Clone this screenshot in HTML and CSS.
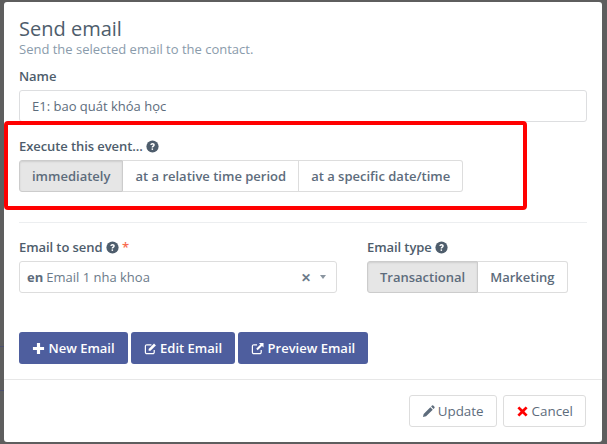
FILE: index.html
```html
<!DOCTYPE html>
<html lang="en">
<head>
<meta charset="UTF-8" />
<meta name="viewport" content="width=device-width, initial-scale=1" />
<title>Send email</title>
<link rel="stylesheet" href="styles.css">
</head>
<body>

<div class="modal">
  <div class="modal-body">
    <h2 class="title">Send email</h2>
    <p class="subtitle">Send the selected email to the contact.</p>

    <label class="field-label label-name">Name</label>
    <input class="text-input" type="text" value="E1: bao quát khóa học" />

    <label class="field-label label-execute">Execute this event...
      <svg class="help" viewBox="0 0 16 16"><circle cx="8" cy="8" r="7.500"/><path class="help-mark" d="M5.300 6.200C5.400 4.600 6.600 3.700 8 3.700c1.600 0 2.800.9 2.800 2.300 0 1.100-.7 1.700-1.400 2.200-.5.300-.7.600-.7 1.100H6.900c0-1.100.4-1.700 1.100-2.200.6-.4.900-.6.900-1 0-.4-.4-.7-.9-.7-.6 0-1 .3-1.100.9z"/><rect class="help-mark" x="6.900" y="10.300" width="1.800" height="1.900"/></svg>
    </label>
    <div class="btn-group">
      <button class="btn active">immediately</button>
      <button class="btn">at a relative time period</button>
      <button class="btn">at a specific date/time</button>
    </div>

    <hr class="divider" />

    <div class="email-row">
      <div class="email-col">
        <label class="field-label">Email to send
          <svg class="help" viewBox="0 0 16 16"><circle cx="8" cy="8" r="7.500"/><path class="help-mark" d="M5.300 6.200C5.400 4.600 6.600 3.700 8 3.700c1.600 0 2.800.9 2.800 2.300 0 1.100-.7 1.700-1.400 2.200-.5.300-.7.600-.7 1.100H6.900c0-1.100.4-1.700 1.100-2.200.6-.4.900-.6.900-1 0-.4-.4-.7-.9-.7-.6 0-1 .3-1.100.9z"/><rect class="help-mark" x="6.900" y="10.300" width="1.800" height="1.900"/></svg>
          <span class="required">*</span>
        </label>
        <div class="select">
          <span class="select-value"><b>en</b>Email 1 nha khoa</span>
          <span class="select-clear">&#10005;</span>
          <span class="select-arrow"></span>
        </div>
      </div>
      <div class="type-col">
        <label class="field-label">Email type
          <svg class="help" viewBox="0 0 16 16"><circle cx="8" cy="8" r="7.500"/><path class="help-mark" d="M5.300 6.200C5.400 4.600 6.600 3.700 8 3.700c1.600 0 2.800.9 2.800 2.300 0 1.100-.7 1.700-1.400 2.200-.5.300-.7.600-.7 1.100H6.900c0-1.100.4-1.700 1.100-2.200.6-.4.900-.6.900-1 0-.4-.4-.7-.9-.7-.6 0-1 .3-1.100.9z"/><rect class="help-mark" x="6.900" y="10.300" width="1.800" height="1.900"/></svg>
        </label>
        <div class="btn-group">
          <button class="btn active">Transactional</button>
          <button class="btn">Marketing</button>
        </div>
      </div>
    </div>

    <div class="actions">
      <button class="btn-primary">
        <svg class="icon" viewBox="0 0 14 14"><path fill="currentColor" d="M5.300 1h3.400v4.300H13v3.400H8.700V13H5.300V8.700H1V5.300h4.300z"/></svg>
        New Email</button>
      <button class="btn-primary">
        <svg class="icon" viewBox="0 0 14 14"><path fill="none" stroke="currentColor" stroke-width="1.300" d="M11 8.500V11a1.500 1.500 0 0 1-1.500 1.500H3A1.500 1.500 0 0 1 1.500 11V4.500A1.500 1.500 0 0 1 3 3h5"/><path fill="currentColor" d="M5 7.500 10.800 1.700l2 2L7 9.500H5z"/></svg>
        Edit Email</button>
      <button class="btn-primary">
        <svg class="icon" viewBox="0 0 14 14"><path fill="none" stroke="currentColor" stroke-width="1.300" d="M11 8.500V11a1.500 1.500 0 0 1-1.500 1.500H3A1.500 1.500 0 0 1 1.500 11V4.500A1.500 1.500 0 0 1 3 3h3.500"/><path fill="currentColor" d="M8.500 1H13.500V6L11.800 4.300 7.200 8.900 5.600 7.300 10.200 2.700z"/></svg>
        Preview Email</button>
    </div>
  </div>

  <div class="modal-footer">
    <button class="btn-plain">
      <svg class="icon" viewBox="0 0 14 14"><path fill="currentColor" d="M1 13l.8-3.400 7.200-7.200 2.600 2.600-7.200 7.200zM9.800 1.600l1-1a1 1 0 0 1 1.300 0l1.300 1.300a1 1 0 0 1 0 1.300l-1 1z"/></svg>
      Update</button>
    <button class="btn-plain">
      <svg class="icon icon-cancel" viewBox="0 0 14 14"><path fill="currentColor" d="M3.600 1.500 7 4.900l3.400-3.400 2.100 2.100L9.100 7l3.400 3.400-2.100 2.100L7 9.100l-3.400 3.400-2.100-2.100L4.900 7 1.500 3.600z"/></svg>
      Cancel</button>
  </div>

  <div class="highlight"></div>
</div>

</body>
</html>
```

FILE: styles.css
```css
* { box-sizing: border-box; }
html, body { height: 100%; }
body {
  margin: 0; padding: 2px 5px 2px 4px; font-family: "Open Sans", sans-serif; color: #4e5d6c; overflow: hidden;
  background: linear-gradient(#4c5070, #4c5070) 0 346px / 4px 1px no-repeat, linear-gradient(#4c5070, #4c5070) 0 390px / 4px 1px no-repeat, #5e5e5e;
}

.modal { position: relative; height: 440px; background: #fff; border-radius: 3px; }
.modal-body { padding: 13.500px 15px 0 15px; height: 378px; border-bottom: 1px solid #e7e7e7; }

.title { margin: 0; font-size: 20px; font-weight: 400; line-height: 26px; color: #4e5d6c; }
.subtitle { margin: 0; font-size: 13px; line-height: 15px; color: #8a9bab; }

.field-label { display: block; font-size: 13px; font-weight: 600; line-height: 18px; letter-spacing: -.08px; color: #4e5d6c; margin-top: 11px; margin-bottom: 5px; }
.label-name { margin-top: 10.500px; }
.label-execute { margin-top: 15px; }
.help { width: 13px; height: 13px; vertical-align: -2px; }
.help circle { fill: #4e5d6c; }
.help .help-mark { fill: #fff; }
.required { color: #f86b4f; }

.text-input { display: block; width: 100%; height: 32px; padding: 0 12px; border: 1px solid #dddee0; border-radius: 3px; font: 13px "Open Sans", sans-serif; color: #5d6c7c; outline: none; }

.btn-group { display: flex; }
.btn { height: 32px; padding: 0 12px; border: 1px solid #ddd; border-left-width: 0; background: #fff; font: 600 13px "Open Sans", sans-serif; color: #5d6c7c; white-space: nowrap; }
.btn:first-child { border-left-width: 1px; border-radius: 3px 0 0 3px; }
.btn:last-child { border-radius: 0 3px 3px 0; }
.btn.active { background: #e6e6e6; border-color: #ccc; box-shadow: inset 0 1px 2px rgba(0,0,0,.1); }

.divider { margin: 30px 0 0; border: 0; border-top: 1px solid #eceef0; }

.email-row { display: flex; margin-top: 4px; }
.email-col { width: 318px; margin-right: 30px; }
.select { display: flex; align-items: center; height: 32px; padding: 0 10px 0 7px; border: 1px solid #ddd; border-radius: 3px; font-size: 13px; color: #6b7a89; }
.select-value { flex: 1; }
.select-value b { font-weight: 700; color: #5d6c7c; margin-right: 3px; }
.select-clear { font-size: 12px; font-weight: 700; color: #6b7a89; margin-right: 9px; }
.select-arrow { width: 0; height: 0; border-left: 3.500px solid transparent; border-right: 3.500px solid transparent; border-top: 4px solid #8a95a0; }

.actions { display: flex; gap: 3px; margin-top: 39px; }
.btn-primary { display: flex; align-items: center; gap: 3.500px; height: 32px; padding: 0 13px; border: 0; border-radius: 3px; background: #4e5e9e; color: #fff; font: 600 13px "Open Sans", sans-serif; white-space: nowrap; }
.icon { width: 13px; height: 13px; flex: none; }

.modal-footer { display: flex; justify-content: flex-end; gap: 6px; padding: 15px 16px 0 0; }
.btn-plain { display: flex; align-items: center; gap: 3px; height: 32px; padding: 0 12px; border: 1px solid #ddd; border-radius: 3px; background: #fff; color: #5d6c7c; font: 400 13.400px "Open Sans", sans-serif; }
.icon-cancel { color: #f00; }

/* red annotation drawn over the form */
.highlight { position: absolute; left: 0; top: 119px; width: 523px; height: 89px; border: 4px solid #f00; border-radius: 4px; }
```
